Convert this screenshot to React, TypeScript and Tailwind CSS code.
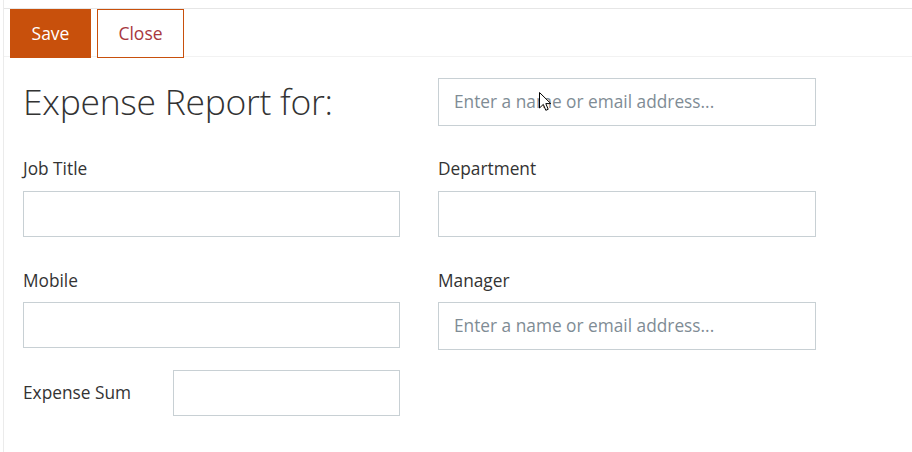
import React from "react";

const font = { fontFamily: '"Open Sans", "Noto Sans", sans-serif' };

function Field({ className = "", placeholder }: { className?: string; placeholder?: string }) {
  return (
    <div
      className={
        "border border-[#c8d0d4] bg-white flex items-center pl-[15px] text-[17.3px] text-[#7f8c95] " + className
      }
    >
      {placeholder}
    </div>
  );
}

function Label({ children }: { children: React.ReactNode }) {
  return <div className="text-[17.3px] leading-[26px] text-[#333333]">{children}</div>;
}

export default function App() {
  return (
    <div className="relative w-[912px] h-[452px] bg-white overflow-hidden" style={font}>
      <div className="h-full ml-[3px] border-l border-[#ebebeb] pt-[8px]">
        <div className="border-t border-[#e6e6e6]">
          <div className="flex gap-[6px] pl-[6px] h-[48px] border-b border-[#f2f2f2]">
            <div className="w-[81px] h-[49px] bg-[#c8500c] text-white text-[17.5px] flex items-center justify-center">
              Save
            </div>
            <div className="w-[87px] h-[49px] bg-[#c8500c] p-px flex">
              <div className="flex-1 bg-white text-[#a8373e] text-[17.5px] flex items-center justify-center">
                Close
              </div>
            </div>
          </div>
        </div>

        <div className="pl-[19px] pt-[21px]">
          <div className="flex gap-[38px]">
            <div className="w-[377px] h-[48px] flex items-center text-[35.5px] font-light text-[#333333] tracking-[-0.3px]">
              Expense Report for:
            </div>
            <Field className="w-[378px] h-[48px]" placeholder="Enter a name or email address..." />
          </div>

          <div className="flex gap-[38px] mt-[30px]">
            <div className="w-[377px] flex flex-col gap-[9px]">
              <Label>Job Title</Label>
              <Field className="h-[46px]" />
            </div>
            <div className="w-[378px] flex flex-col gap-[9px]">
              <Label>Department</Label>
              <Field className="h-[46px]" />
            </div>
          </div>

          <div className="flex gap-[38px] mt-[31px] items-start">
            <div className="w-[377px] flex flex-col gap-[8px]">
              <Label>Mobile</Label>
              <Field className="h-[46px]" />
            </div>
            <div className="w-[378px] flex flex-col gap-[8px]">
              <Label>Manager</Label>
              <Field className="h-[48px]" placeholder="Enter a name or email address..." />
            </div>
          </div>

          <div className="flex items-center mt-[20px] w-[377px]">
            <div className="w-[150px]">
              <Label>Expense Sum</Label>
            </div>
            <Field className="w-[227px] h-[46px]" />
          </div>
        </div>
      </div>

      <svg className="absolute left-[539px] top-[92px]" width="13" height="20" viewBox="0 0 13 20">
        <path
          d="M0.5 0.5 L0.5 16 L4.3 12.4 L6.8 18.3 L9.2 17.3 L6.8 11.6 L11.8 11.6 Z"
          fill="white"
          stroke="black"
          strokeWidth="1"
          strokeLinejoin="miter"
        />
      </svg>
    </div>
  );
}
